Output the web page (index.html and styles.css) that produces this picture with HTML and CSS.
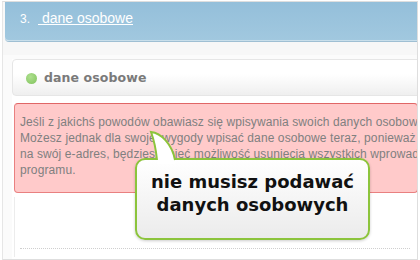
FILE: index.html
```html
<!DOCTYPE html>
<html lang="pl">
<head>
<meta charset="utf-8">
<title>dane osobowe</title>
<link rel="stylesheet" href="styles.css">
</head>
<body>
<div class="wrap">
  <div class="hdr"><span class="num">3.</span><a class="step" href="#">&nbsp;dane osobowe</a></div>
  <div class="band"></div>
  <div class="main">
    <div class="panel">
      <div class="card"><span class="dot"></span><h2 class="title">dane osobowe</h2></div>
      <div class="body">
        <div class="alert">
          <p class="msg">Jeśli z jakichś powodów obawiasz się wpisywania swoich danych osobowych<br>Możesz jednak dla swojej wygody wpisać dane osobowe teraz, ponieważ<br>na swój e-adres, będziesz mieć możliwość usunięcia wszystkich wprowadzonych<br>programu.</p>
        </div>
        <div class="rest"><div class="dots"></div></div>
      </div>
    </div>
  </div>
  <div class="bubble">
    <svg class="tail" width="36" height="34" viewBox="0 0 36 34">
      <path d="M12 34 L12 30 C11 20 9 10 6 2 C16 3 27 14 30 30 L30 34 Z" fill="#ffffff"/>
      <path d="M12 30 C11 20 9 10 6 2 C16 3 27 14 30 30" fill="none" stroke="#8cc43c" stroke-width="2"/>
    </svg>
    <p class="say">nie musisz podawać<br>danych osobowych</p>
  </div>
</div>
</body>
</html>
```
FILE: styles.css
```css
html, body {
  margin: 0;
  padding: 0;
  background: #ffffff;
}
.wrap {
  position: relative;
  margin: 1px 0 0 2px;
  width: 414px;
  height: 257px;
  border: 1px solid #dedede;
  border-left-color: #e6e6e6;
  overflow: hidden;
  background: #f8f8f8;
}
.hdr {
  margin-left: 2px;
  height: 30px;
  padding: 8px 0 0 15px;
  background: linear-gradient(#94bfda, #a1c8df);
  border-bottom: 1px solid #c9dfeb;
  box-shadow: 0 1px 0 #9fbfd3;
  border-bottom-left-radius: 4px;
  display: flex;
  align-items: baseline;
  font-family: "Liberation Sans", Arial, sans-serif;
  color: #ffffff;
}
.num {
  font-size: 12px;
  line-height: 16px;
}
.step {
  margin-left: 8px;
  font-size: 14px;
  line-height: 16px;
  color: #ffffff;
  text-decoration: underline;
}
.band {
  height: 13px;
  margin-top: 1px;
  background: #f7f7f7;
}
.main {
  background: #fbfbfb;
  padding-top: 4px;
  height: 204px;
}
.panel {
  margin-left: 9px;
  background: #ffffff;
  height: 204px;
}
.card {
  box-sizing: border-box;
  height: 37px;
  width: 420px;
  border: 1px solid #e6e6e6;
  border-radius: 4px;
  background: linear-gradient(#ffffff 40%, #efefef);
  display: flex;
  align-items: center;
  padding-left: 13px;
  gap: 7px;
}
.dot {
  width: 11px;
  height: 11px;
  margin-top: 1px;
  border-radius: 50%;
  background: radial-gradient(circle at 40% 35%, #aee08f, #80c25c);
}
.title {
  margin: 0;
  font-family: "DejaVu Sans", Verdana, sans-serif;
  font-weight: bold;
  font-size: 12.5px;
  letter-spacing: 0.1px;
  color: #7a7a7a;
  line-height: 16px;
}
.body {
  padding-left: 2px;
}
.alert {
  box-sizing: border-box;
  margin-top: 7px;
  width: 404px;
  height: 90px;
  background: #ffcaca;
  border: 1px solid #e98080;
  border-top-color: #e06666;
  border-radius: 4px;
  padding: 10px 0 0 5px;
  overflow: hidden;
}
.msg {
  margin: 0;
  white-space: nowrap;
  font-family: "Liberation Sans", Arial, sans-serif;
  font-size: 12px;
  line-height: 16px;
  letter-spacing: 0.1px;
  color: #808080;
}
.rest {
  margin-top: 4px;
  height: 60px;
  border-left: 1px solid #ececec;
  padding: 51px 0 0 5px;
  box-sizing: border-box;
}
.dots {
  width: 390px;
  border-top: 1px dotted #cfcfcf;
}
.bubble {
  position: absolute;
  left: 132px;
  top: 156px;
  box-sizing: border-box;
  width: 235px;
  height: 82px;
  border: 2px solid #8cc43c;
  border-radius: 10px;
  background: linear-gradient(#ffffff, #ebebeb);
  box-shadow: 0 1px 3px rgba(0, 0, 0, 0.2);
}
.tail {
  position: absolute;
  left: 8px;
  top: -30px;
}
.say {
  margin: 0;
  padding-top: 10px;
  text-align: center;
  font-family: "DejaVu Sans", Verdana, sans-serif;
  font-weight: bold;
  font-size: 18px;
  line-height: 23px;
  color: #111111;
}
```
